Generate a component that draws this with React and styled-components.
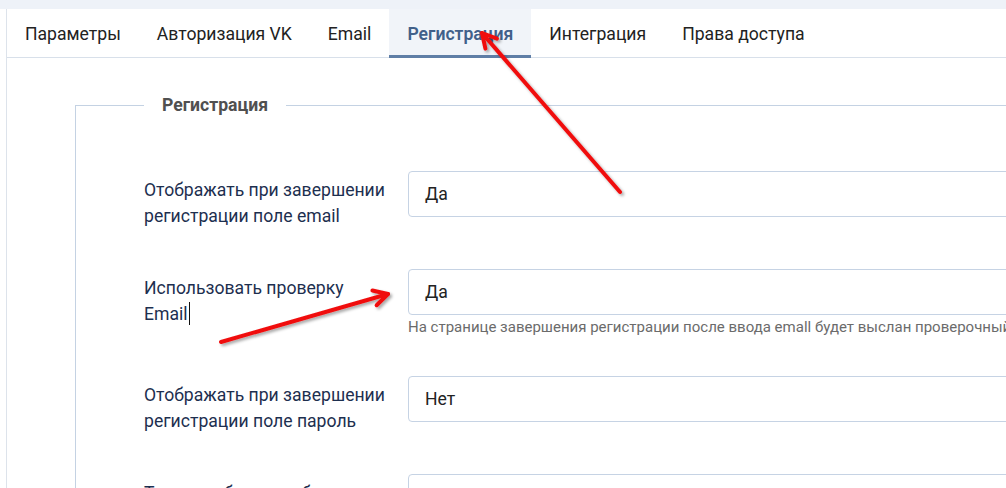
import styled, { createGlobalStyle } from "styled-components";

const GlobalStyle = createGlobalStyle`
  html, body {
    margin: 0;
    padding: 0;
    background: #fff;
  }
  body {
    font-family: Roboto, "Noto Sans", "Liberation Sans", sans-serif;
  }
`;

const Page = styled.div`
  position: relative;
  width: 1006px;
  height: 488px;
  overflow: hidden;
  background: #fff;
`;

const TopBand = styled.div`
  height: 9px;
  background: #eef2f8;
`;

const Panel = styled.div`
  margin-left: 6px;
  border-left: 1px solid #dde3eb;
  height: 479px;
`;

const Tabs = styled.ul`
  display: flex;
  margin: 0;
  padding: 0;
  list-style: none;
  height: 48px;
  border-bottom: 1px solid #d8e0ea;
`;

const Tab = styled.li`
  display: flex;
  align-items: center;
  padding: 3px 18px 0;
  font-size: 17.6px;
  color: ${(p) => (p.$active ? "#41608a" : "#222")};
  font-weight: ${(p) => (p.$active ? 600 : 400)};
  background: ${(p) => (p.$active ? "#f1f4f9" : "transparent")};
  border-bottom: 3px solid ${(p) => (p.$active ? "#5f7ea6" : "transparent")};
  margin-bottom: -1px;
  white-space: nowrap;
`;

const Fieldset = styled.fieldset`
  margin: 37px 0 0 68px;
  padding: 56px 0 0 68px;
  border: 1px solid #c4d2e3;
  border-right: none;
  border-bottom: none;
  min-width: 0;
  width: 1000px;
`;

const Legend = styled.legend`
  padding: 0 18px;
  font-size: 17.6px;
  font-weight: 700;
  color: #505050;
`;

const Row = styled.div`
  display: flex;
  align-items: flex-start;
  margin-bottom: 40px;
`;

const Label = styled.div`
  width: 264px;
  flex-shrink: 0;
  padding-top: 6px;
  padding-right: 16px;
  box-sizing: border-box;
  font-size: 17.6px;
  line-height: 26px;
  color: #1d2f4f;
`;

const Caret = styled.span`
  display: inline-block;
  width: 1px;
  height: 23px;
  background: #111;
  vertical-align: -5px;
  margin-left: 1px;
`;

const Control = styled.div`
  flex: 1;
  min-width: 0;
`;

const Select = styled.div`
  height: 46px;
  box-sizing: border-box;
  border: 1px solid #c6d3e4;
  border-radius: 4px;
  padding-left: 16px;
  display: flex;
  align-items: center;
  font-size: 17.6px;
  color: #222;
  width: 700px;
`;

const Help = styled.div`
  margin-top: 4px;
  font-size: 15px;
  line-height: 17px;
  color: #6b6b6b;
  white-space: nowrap;
`;

const Arrows = styled.svg`
  position: absolute;
  left: 0;
  top: 0;
  pointer-events: none;
`;

const Arrow = ({ x1, y1, x2, y2 }) => {
  const a = Math.atan2(y2 - y1, x2 - x1);
  const len = 16;
  const spread = 0.5;
  const p1 = [x2 - len * Math.cos(a - spread), y2 - len * Math.sin(a - spread)];
  const p2 = [x2 - len * Math.cos(a + spread), y2 - len * Math.sin(a + spread)];
  return (
    <g
      stroke="#f01010"
      strokeWidth="4"
      strokeLinecap="round"
      strokeLinejoin="round"
      fill="none"
      filter="url(#shadow)"
    >
      <line x1={x1} y1={y1} x2={x2} y2={y2} />
      <polyline points={`${p1[0]},${p1[1]} ${x2},${y2} ${p2[0]},${p2[1]}`} />
    </g>
  );
};

const tabs = [
  "Параметры",
  "Авторизация VK",
  "Email",
  "Регистрация",
  "Интеграция",
  "Права доступа",
];

const App = () => {
  return (
    <Page>
      <GlobalStyle />
      <TopBand />
      <Panel>
        <Tabs>
          {tabs.map((t) => (
            <Tab key={t} $active={t === "Регистрация"}>
              {t}
            </Tab>
          ))}
        </Tabs>
        <Fieldset>
          <Legend>Регистрация</Legend>
          <Row>
            <Label>
              Отображать при завершении регистрации поле email
            </Label>
            <Control>
              <Select>Да</Select>
            </Control>
          </Row>
          <Row>
            <Label>
              Использовать проверку
              <br />
              Email
              <Caret />
            </Label>
            <Control>
              <Select>Да</Select>
              <Help>
                На странице завершения регистрации после ввода emall будет
                выслан проверочный код
              </Help>
            </Control>
          </Row>
          <Row>
            <Label>
              Отображать при завершении регистрации поле пароль
            </Label>
            <Control>
              <Select>Нет</Select>
            </Control>
          </Row>
          <Row>
            <Label>Текст сообщения об успешной регистрации</Label>
            <Control>
              <Select>Да</Select>
            </Control>
          </Row>
        </Fieldset>
      </Panel>
      <Arrows width="1006" height="488" viewBox="0 0 1006 488">
        <defs>
          <filter id="shadow" x="-20%" y="-20%" width="140%" height="140%">
            <feDropShadow dx="2" dy="2" stdDeviation="1.5" floodColor="#000" floodOpacity="0.35" />
          </filter>
        </defs>
        <Arrow x1={620} y1={192} x2={482} y2={33} />
        <Arrow x1={221} y1={342} x2={388} y2={294} />
      </Arrows>
    </Page>
  );
};

export default App;
